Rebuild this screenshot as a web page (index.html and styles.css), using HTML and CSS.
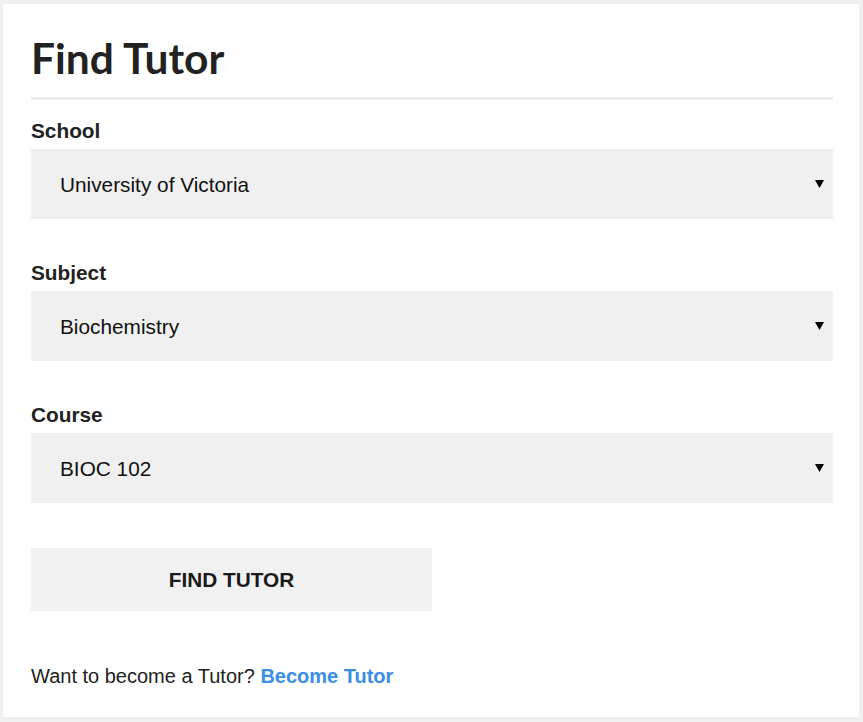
FILE: index.html
```html
<!DOCTYPE html>
<html lang="en">
<head>
<meta charset="utf-8">
<title>Find Tutor</title>
<link rel="stylesheet" href="styles.css">
</head>
<body>
<main class="card">
  <h1 class="title">Find Tutor</h1>
  <form class="form">
    <div class="field">
      <div class="label">School</div>
      <div class="select"><span>University of Victoria</span><svg class="arrow" width="9" height="8" viewBox="0 0 9 8"><path d="M0 0H9L4.5 8Z" fill="#000"/></svg></div>
    </div>
    <div class="field">
      <div class="label">Subject</div>
      <div class="select"><span>Biochemistry</span><svg class="arrow" width="9" height="8" viewBox="0 0 9 8"><path d="M0 0H9L4.5 8Z" fill="#000"/></svg></div>
    </div>
    <div class="field field-last">
      <div class="label">Course</div>
      <div class="select"><span>BIOC 102</span><svg class="arrow" width="9" height="8" viewBox="0 0 9 8"><path d="M0 0H9L4.5 8Z" fill="#000"/></svg></div>
    </div>
    <div class="button">FIND TUTOR</div>
  </form>
  <p class="footer">Want to become a Tutor? <a class="link" href="#">Become Tutor</a></p>
</main>
</body>
</html>
```
FILE: styles.css
```css
html, body {
  margin: 0;
  padding: 0;
}
body {
  background: #f0f0f0;
  padding: 4px 5px 5px 3px;
  font-family: "Liberation Sans", Arial, sans-serif;
  color: #222;
}
.card {
  background: #fff;
  padding: 28px 26px 29px 28px;
  height: 713px;
  box-sizing: border-box;
  width: 856px;
}
.title {
  font-family: Lato, sans-serif;
  font-weight: 700;
  font-size: 42.5px;
  line-height: 51px;
  color: #222;
  margin: 0;
  padding-bottom: 14px;
  border-bottom: 3px solid #ececec;
}
.form {
  display: flex;
  flex-direction: column;
  margin-top: 19px;
}
.field {
  display: flex;
  flex-direction: column;
  gap: 6px;
  margin-bottom: 42px;
}
.field-last {
  margin-bottom: 45px;
}
.label {
  font-size: 20.8px;
  font-weight: 700;
  color: #222;
  line-height: 24px;
}
.select {
  background: #f0f0f0;
  height: 70px;
  display: flex;
  align-items: center;
  justify-content: space-between;
  padding: 0 9px 0 29px;
  font-size: 20.8px;
  color: #111;
}
.select span {
  padding-top: 1px;
}
.arrow {
  display: block;
}
.button {
  width: 50%;
  height: 63px;
  background: #f1f1f1;
  display: flex;
  align-items: center;
  justify-content: center;
  font-size: 20.8px;
  font-weight: 700;
  color: #1a1a1a;
}
.footer {
  margin: 54px 0 0;
  font-size: 20px;
  line-height: 23px;
  color: #222;
}
.link {
  color: #3a8ee6;
  font-weight: 700;
  text-decoration: none;
}
```
